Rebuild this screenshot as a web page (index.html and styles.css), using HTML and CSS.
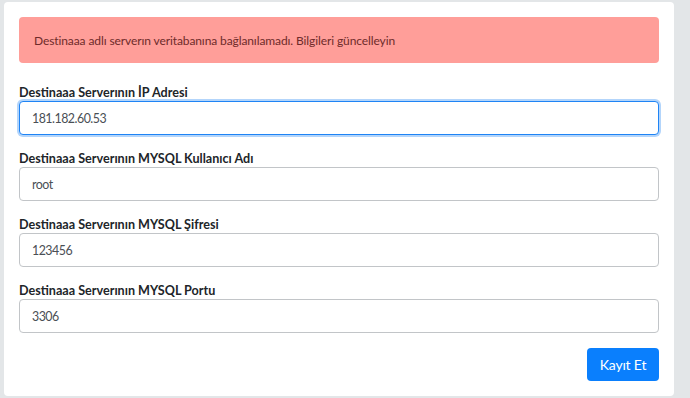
FILE: index.html
```html
<!DOCTYPE html>
<html lang="tr">
<head>
<meta charset="utf-8">
<title>Server</title>
<link rel="stylesheet" href="styles.css">
</head>
<body>
<div class="card">
  <div class="alert">Destinaaa adlı serverın veritabanına bağlanılamadı. Bilgileri güncelleyin</div>
  <form class="form">
    <div class="group">
      <label class="label">Destinaaa Serverının İP Adresi</label>
      <input class="input focused" type="text" value="181.182.60.53">
    </div>
    <div class="group">
      <label class="label">Destinaaa Serverının MYSQL Kullanıcı Adı</label>
      <input class="input" type="text" value="root">
    </div>
    <div class="group">
      <label class="label">Destinaaa Serverının MYSQL Şifresi</label>
      <input class="input" type="text" value="123456">
    </div>
    <div class="group">
      <label class="label">Destinaaa Serverının MYSQL Portu</label>
      <input class="input" type="text" value="3306">
    </div>
    <div class="actions">
      <button class="btn" type="button">Kayıt Et</button>
    </div>
  </form>
</div>
</body>
</html>
```

FILE: styles.css
```css
html, body {
  margin: 0;
  padding: 0;
}
body {
  background: #e3e6e8;
  font-family: Lato, "Open Sans", sans-serif;
  padding: 2px 16px 0 4px;
  height: 398px;
  box-sizing: border-box;
  overflow: hidden;
}
.card {
  background: #ffffff;
  border-radius: 4px;
  padding: 15px;
  width: 640px;
}
.alert {
  background: #ff9e99;
  color: #6e2b2a;
  border-radius: 4px;
  height: 46px;
  display: flex;
  align-items: center;
  padding: 0 15px;
  font-size: 12px;
  letter-spacing: -0.1px;
  margin-bottom: 22px;
}
.form {
  display: flex;
  flex-direction: column;
}
.group {
  display: flex;
  flex-direction: column;
  margin-bottom: 16px;
}
.group:nth-child(4) {
  margin-bottom: 15px;
}
.label {
  font-weight: 700;
  font-size: 12.6px;
  line-height: 16px;
  color: #212529;
}
.input {
  height: 34px;
  box-sizing: border-box;
  border: 1px solid #c2c5c8;
  border-radius: 4px;
  padding: 0 12px;
  font-family: Lato, "Open Sans", sans-serif;
  font-size: 12.4px;
  letter-spacing: -0.5px;
  color: #4a4f55;
  background: #fff;
  outline: none;
}
.input.focused {
  border-color: #1f84f5;
  box-shadow: 0 0 0 2px #b3d5fb;
}
.actions {
  display: flex;
  justify-content: flex-end;
}
.btn {
  background: #0a7ffd;
  color: #fff;
  border: none;
  border-radius: 4px;
  height: 33px;
  width: 72px;
  font-family: Lato, "Open Sans", sans-serif;
  font-size: 14px;
  letter-spacing: -0.2px;
  padding: 0;
}
```
